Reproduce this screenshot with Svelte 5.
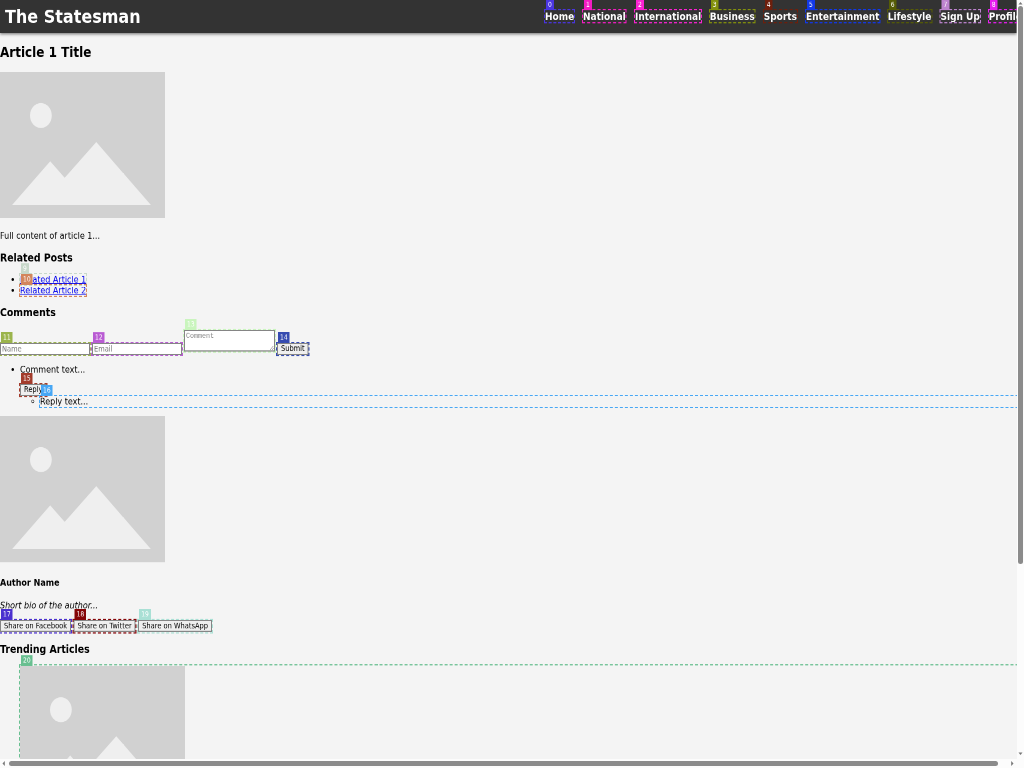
<script>
  const nav = [
    { label: 'Home', color: '#4a35e0', w: 76 },
    { label: 'National', color: '#f51cc3', w: 104 },
    { label: 'International', color: '#fa22d2', w: 149.5 },
    { label: 'Business', color: '#83900c', w: 108 },
    { label: 'Sports', color: '#6e1f0c', w: 84.5 },
    { label: 'Entertainment', color: '#1238e8', w: 163.5 },
    { label: 'Lifestyle', color: '#565c06', w: 105.5 },
    { label: 'Sign Up', color: '#bd83cf', w: 96.5 },
    { label: 'Profile', color: '#e81df0', w: 80 }
  ];
  const related = [
    { label: 'Related Article 1', n: 9, color: '#c8d8ca' },
    { label: 'Related Article 2', n: 10, color: '#d3855c' }
  ];
  const shares = [
    { label: 'Share on Facebook', n: 17, color: '#4b30cf' },
    { label: 'Share on Twitter', n: 18, color: '#850508' },
    { label: 'Share on WhatsApp', n: 19, color: '#a9e0d5' }
  ];
</script>

{#snippet badge(n, color)}
  <span class="badge" style="background:{color}">{n}</span>
{/snippet}

{#snippet picture()}
  <svg class="picture" viewBox="0 0 165 146" preserveAspectRatio="none">
    <rect width="165" height="146" fill="#d1d1d1" />
    <ellipse cx="40.9" cy="43.6" rx="10.9" ry="12.5" fill="#efefef" />
    <path d="M12 133 50.2 89.2 64.7 105.7 96.3 70 151 133Z" fill="#efefef" />
  </svg>
{/snippet}

<div class="window">
  <div class="viewport">
    <div class="page">
      <header>
        <div class="brand">The Statesman</div>
        <nav>
          {#each nav as item, i}
            <div class="slot" style="width:{item.w}px">
              <a class="mark" href="#top" style="--c:{item.color}">{item.label}{@render badge(i, item.color)}</a>
            </div>
          {/each}
        </nav>
      </header>

      <h2>Article 1 Title</h2>
      <div class="figure">{@render picture()}</div>
      <p>Full content of article 1...</p>

      <h3>Related Posts</h3>
      <ul>
        {#each related as item}
          <li><a class="mark" href="#related" style="--c:{item.color}">{item.label}{@render badge(item.n, item.color)}</a></li>
        {/each}
      </ul>

      <h3>Comments</h3>
      <form>
        <span class="mark field" style="--c:#9bb44c"><input placeholder="Name" />{@render badge(11, '#9bb44c')}</span>
        <span class="mark field" style="--c:#b95bd3"><input placeholder="Email" />{@render badge(12, '#b95bd3')}</span>
        <span class="mark area" style="--c:#c9f5bd"><textarea placeholder="Comment"></textarea>{@render badge(13, '#c9f5bd')}</span>
        <span class="mark field" style="--c:#354bb0"><button type="button">Submit</button>{@render badge(14, '#354bb0')}</span>
      </form>

      <ul>
        <li>
          <p class="comment">Comment text...</p>
          <div class="actions"><span class="mark" style="--c:#a33c2c"><button type="button">Reply</button>{@render badge(15, '#a33c2c')}</span></div>
          <ul class="replies">
            <li class="mark" style="--c:#47a7f5">Reply text...{@render badge(16, '#47a7f5')}</li>
          </ul>
        </li>
      </ul>

      <div class="figure">{@render picture()}</div>
      <h4>Author Name</h4>
      <p class="bio">Short bio of the author...</p>
      <div class="shares">
        {#each shares as item}
          <span class="mark" style="--c:{item.color}"><button type="button">{item.label}</button>{@render badge(item.n, item.color)}</span>
        {/each}
      </div>

      <h3>Trending Articles</h3>
      <ul class="trending">
        <li class="mark" style="--c:#68bf90">{@render picture()}{@render badge(20, '#68bf90')}</li>
      </ul>
    </div>
  </div>

  <div class="vbar">
    <svg width="7" height="6" viewBox="0 0 7 6"><path d="M1.5 4.5h4L3.5 2Z" fill="#777" /></svg>
    <div class="vthumb"></div>
    <svg width="7" height="8" viewBox="0 0 7 8"><path d="M1.5 2.5h4L3.5 5Z" fill="#777" /></svg>
  </div>
  <div class="hbar">
    <svg width="9" height="9" viewBox="0 0 9 9"><path d="M4.8 2v5L2.5 4.5Z" fill="#777" /></svg>
    <div class="hthumb"></div>
    <svg class="right" width="9" height="9" viewBox="0 0 9 9"><path d="M3.2 2v5L5.5 4.5Z" fill="#777" /></svg>
  </div>
</div>

<style>
  :global(body) { margin: 0; overflow: hidden; }
  .window {
    width: 1024px;
    height: 768px;
    display: grid;
    grid-template: 759px 9px / 1017px 7px;
    overflow: hidden;
    background: #fcfcfc;
  }
  .viewport { overflow: hidden; background: #f4f4f4; }
  .page {
    width: 2033px;
    height: 1500px;
    transform: scale(0.5, 0.5697);
    transform-origin: 0 0;
    will-change: transform;
    font: 16px 'DejaVu Sans', sans-serif;
    color: #000;
    background: #f4f4f4;
    display: flow-root;
  }
  header {
    height: 58px;
    display: flex;
    align-items: center;
    background: #333;
    color: #fff;
    box-shadow: 0 2px 5px rgba(0, 0, 0, 0.5);
  }
  .brand { width: 1080px; flex: none; padding: 0 0 1px 10px; box-sizing: border-box; font-size: 32px; font-weight: bold; }
  nav { display: flex; font-size: 18px; font-weight: bold; padding: 0 0 1px 10px; }
  nav a { color: #fff; text-decoration: none; }
  .slot { flex: none; white-space: nowrap; }
  h2 { font-size: 24px; margin: 20px 0; }
  h3 { font-size: 18.72px; margin: 18.72px 0; }
  h4 { font-size: 16px; margin: 21.28px 0; }
  p { margin: 16px 0; }
  ul { margin: 16px 0; padding-left: 40px; }
  li a { color: #00e; }
  .figure { padding-bottom: 5px; }
  .picture { width: 330px; height: 257px; display: block; }
  .mark { position: relative; }
  .mark::after {
    content: '';
    position: absolute;
    inset: -2px;
    border: 2px dashed var(--c);
    pointer-events: none;
  }
  .badge {
    position: absolute;
    left: 2px;
    top: -19px;
    z-index: 2;
    padding: 2px 4px;
    font-size: 12px;
    font-weight: normal;
    line-height: 15px;
    color: #fff;
    display: inline-block;
  }
  form { display: flex; gap: 4px; height: 44px; align-items: flex-start; padding-top: 1px; }
  form .mark, .shares .mark, .actions .mark { display: block; }
  .field { margin-top: 23px; }
  input, textarea, button {
    display: block;
    margin: 0;
    box-sizing: border-box;
    font: 13.333px 'DejaVu Sans', sans-serif;
    border: 2px solid #858585;
    border-radius: 0;
  }
  input { width: 180px; height: 21px; padding: 1px 2px; background: #fff; }
  textarea { width: 182px; height: 38px; padding: 1px 2px; font-family: 'Liberation Mono', monospace; }
  input::placeholder { color: #757575; }
  textarea::placeholder { color: #858585; }
  button { height: 21px; padding: 0 6px; background: #efefef; color: #000; line-height: 16px; white-space: nowrap; }
  .comment { margin-top: 0; }
  .actions { display: flex; }
  .replies { margin: 0 -12px 0 0; }
  .bio { font-style: italic; }
  .shares { display: flex; gap: 5px; height: 22px; }
  .trending { list-style: none; margin-right: -12px; }
  .trending .mark::after { inset: -3px -2px -2px; }
  .vbar { display: flex; flex-direction: column; }
  .vthumb { width: 5px; height: 558px; margin: 0 0 186px 1px; border-radius: 3px; background: #8b8b8b; }
  .hbar { grid-column: 1 / 3; display: flex; align-items: center; }
  .hthumb { width: 989px; height: 5px; border-radius: 3px; background: #8b8b8b; }
  .right { margin-left: 10px; }
</style>
